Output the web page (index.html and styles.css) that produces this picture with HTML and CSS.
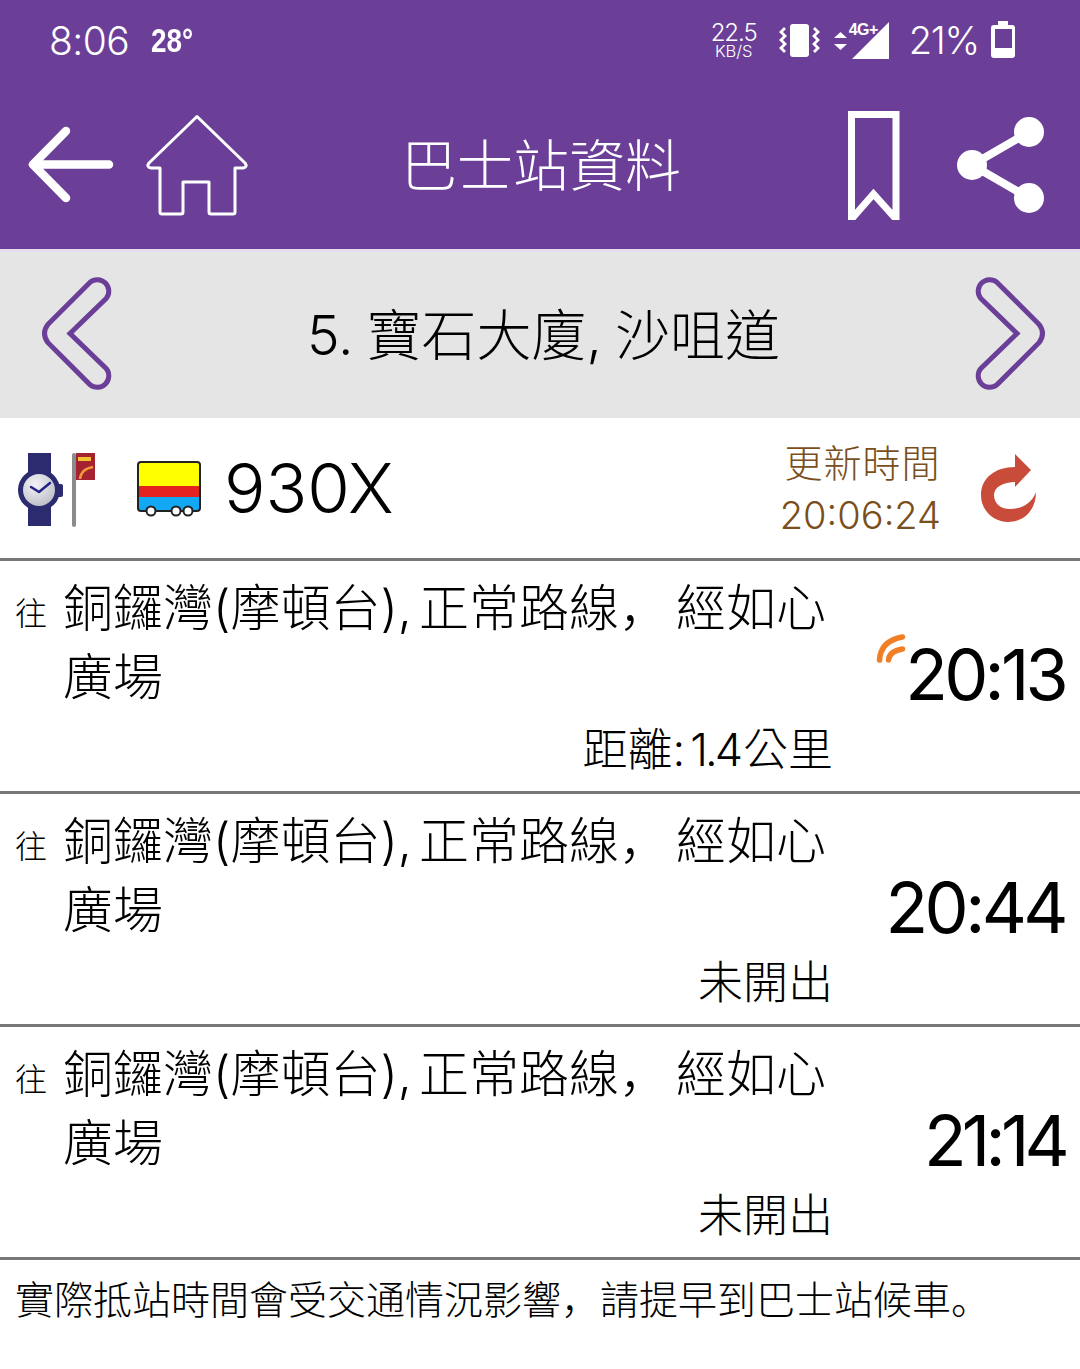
FILE: index.html
```html
<!DOCTYPE html>
<html lang="zh-Hant">

<head>
	<meta charset="UTF-8">
	<meta name="viewport" content="width=device-width, initial-scale=1.0">
	<title>巴士站資料</title>
	<link rel="stylesheet" href="styles.css">
</head>

<body>
	<header class="app-header">
		<div class="status-bar">
			<span class="clock">8:06</span>
			<span class="temp">28°</span>
			<div class="status-right">
				<div class="net-speed">
					<span class="net-value">22.5</span>
					<span class="net-unit">KB/S</span>
				</div>
				<svg class="vibrate-icon" viewBox="778 20 42 40" width="42" height="40">
					<rect x="789" y="24" width="19" height="33" rx="3" fill="#fff" />
					<path d="M784 28l-4 4 4 4-4 4 4 4-4 4 4 4M813 28l4 4-4 4 4 4-4 4 4 4-4 4" fill="none" stroke="#fff" stroke-width="2.800" />
				</svg>
				<div class="signal">
					<svg viewBox="830 18 60 42" width="60" height="42">
						<path d="M839.500 31l6.500 6h-13zM839.500 49l6.500-6h-13z" fill="#fff" />
						<path d="M851 58l37-37v37z" fill="#fff" />
					</svg>
					<span class="signal-label">4G+</span>
				</div>
				<span class="battery-text">21%</span>
				<svg class="battery-icon" viewBox="988 20 30 40" width="30" height="40">
					<path d="M998 21h10v4h4q3 0 3 3v27q0 3-3 3h-18q-3 0-3-3v-27q0-3 3-3h4z" fill="#fff" />
					<rect x="995" y="29" width="17" height="19" fill="#6b3f97" />
				</svg>
			</div>
		</div>

		<div class="toolbar">
			<svg class="back-icon" viewBox="26 124 92 80" width="92" height="80">
				<path d="M109 163.500H36M66 130L33 163.500 66 197" fill="none" stroke="#fff" stroke-width="8.500" stroke-linecap="round" stroke-linejoin="round" />
			</svg>
			<svg class="home-icon" viewBox="144 112 106 104" width="106" height="104">
				<path d="M197 115.500L149 162q-3 4 2 5h9v44q0 2 2 2h19q2 0 2-2v-30h26v30q0 2 2 2h22q2 0 2-2v-44h8q5-1 2-5z" fill="none" stroke="#fff" stroke-width="3" stroke-linejoin="round" />
			</svg>
			<h1 class="page-title">巴士站資料</h1>
			<svg class="bookmark-icon" viewBox="846 111 56 110" width="56" height="110">
				<path d="M851.500 220V115.500H896V220L873.500 195z" fill="none" stroke="#fff" stroke-width="7" />
			</svg>
			<svg class="share-icon" viewBox="955 114 92 100" width="92" height="100">
				<path d="M1029 131L972 164l57 33" fill="none" stroke="#fff" stroke-width="8" />
				<circle cx="1029" cy="131" r="15" fill="#fff" />
				<circle cx="972" cy="164" r="15" fill="#fff" />
				<circle cx="1029" cy="197" r="15" fill="#fff" />
			</svg>
		</div>
	</header>

	<nav class="stop-nav">
		<svg class="chevron" viewBox="0 0 76 120" width="76" height="120">
			<path d="M49.900 7.400L8 49.300Q1 58.500 8 67.700L49.900 109.600A11.500 11.500 0 0 0 66.100 93.400L30 58.500 66.100 23.600A11.500 11.500 0 0 0 49.900 7.400Z" fill="none" stroke="#6b3f97" stroke-width="5" />
		</svg>
		<span class="stop-name">5. 寶石大廈, 沙咀道</span>
		<svg class="chevron chevron-next" viewBox="0 0 76 120" width="76" height="120">
			<path d="M49.900 7.400L8 49.300Q1 58.500 8 67.700L49.900 109.600A11.500 11.500 0 0 0 66.100 93.400L30 58.500 66.100 23.600A11.500 11.500 0 0 0 49.900 7.400Z" fill="none" stroke="#6b3f97" stroke-width="5" />
		</svg>
	</nav>

	<section class="route-bar">
		<svg class="watch-icon" viewBox="16 451 82 78" width="82" height="78">
			<defs>
				<radialGradient id="face" cx="0.4" cy="0.35" r="0.8">
					<stop offset="0" stop-color="#f4f4f8" />
					<stop offset="1" stop-color="#aeb0b8" />
				</radialGradient>
			</defs>
			<rect x="28" y="453" width="23" height="20" fill="#2d2b70" />
			<rect x="28" y="507" width="23" height="19" fill="#2d2b70" />
			<rect x="56" y="484" width="7" height="13" rx="2" fill="#2d2b70" />
			<circle cx="39" cy="490" r="18.500" fill="url(#face)" stroke="#2d2b70" stroke-width="5" />
			<path d="M31 487l8 5 11-9" fill="none" stroke="#23238a" stroke-width="2.500" stroke-linecap="round" stroke-linejoin="round" />
			<rect x="72" y="453" width="4" height="74" rx="2" fill="#8b8b8b" />
			<rect x="76" y="453" width="19" height="27" fill="#a52230" />
			<rect x="78" y="457" width="13" height="4" fill="#f2c230" />
			<path d="M80 479q1-10 13-12" fill="none" stroke="#ef9a3a" stroke-width="2.500" />
		</svg>
		<svg class="bus-icon" viewBox="135 459 68 60" width="68" height="60">
			<path d="M138 497h62v11q0 3-3 3h-56q-3 0-3-3z" fill="#12a8f5" />
			<rect x="138" y="486" width="62" height="11" fill="#e4221f" />
			<path d="M141 462h56q3 0 3 3v21h-62v-21q0-3 3-3z" fill="#ffff00" />
			<path d="M141 462h56q3 0 3 3v43q0 3-3 3h-56q-3 0-3-3v-43q0-3 3-3z" fill="none" stroke="#222" stroke-width="2" />
			<circle cx="151" cy="511" r="4.500" fill="#fff" stroke="#222" stroke-width="2" />
			<circle cx="176" cy="511" r="4.500" fill="#fff" stroke="#222" stroke-width="2" />
			<circle cx="188" cy="511" r="4.500" fill="#fff" stroke="#222" stroke-width="2" />
		</svg>
		<span class="route-no">930X</span>
		<div class="updated">
			<span class="updated-label">更新時間</span>
			<span>20:06:24</span>
		</div>
		<svg class="refresh-icon" viewBox="979 454 60 70" width="60" height="70">
			<path d="M1015 467C995 467 981 478 981 495C981 511 994 522 1008 522C1024 522 1036 510 1036 492C1032 503 1022 509 1010 509C1000 509 994 503 994 495C994 487 1004 482 1015 482V487L1031 470 1015 454z" fill="#c94c3a" />
		</svg>
	</section>

	<main class="eta-list">
		<article class="eta-row">
			<div class="eta-info">
				<div class="eta-dest">
					<span class="to-label">往</span>
					<span class="dest-text" lang="zh-Hans">銅鑼灣(摩頓台), 正常路線， 經如心廣場</span>
				</div>
				<p class="eta-note">
					<span>距離:</span>
					<span class="dist-num">1.4</span>
					<span>公里</span>
				</p>
			</div>
			<div class="eta-time">
				<svg class="live-icon" viewBox="874 631 34 32" width="34" height="32">
					<path d="M879.500 660q1-19 23-23M888.500 660q1-9 14-11" fill="none" stroke="#f07f26" stroke-width="5.500" stroke-linecap="round" />
				</svg>
				<span class="tight-one">20:13</span>
			</div>
		</article>
		<article class="eta-row">
			<div class="eta-info">
				<div class="eta-dest">
					<span class="to-label">往</span>
					<span class="dest-text" lang="zh-Hans">銅鑼灣(摩頓台), 正常路線， 經如心廣場</span>
				</div>
				<p class="eta-note"><span>未開出</span></p>
			</div>
			<div class="eta-time"><span>20:44</span></div>
		</article>
		<article class="eta-row">
			<div class="eta-info">
				<div class="eta-dest">
					<span class="to-label">往</span>
					<span class="dest-text" lang="zh-Hans">銅鑼灣(摩頓台), 正常路線， 經如心廣場</span>
				</div>
				<p class="eta-note"><span>未開出</span></p>
			</div>
			<div class="eta-time"><span class="tight-two">21:14</span></div>
		</article>
	</main>

	<p class="footnote" lang="zh-Hans">實際抵站時間會受交通情況影響，請提早到巴士站候車。</p>
</body>

</html>
```

FILE: styles.css
```css
* {
	margin: 0;
	padding: 0;
	box-sizing: border-box;
}

body {
	background: white;
	color: #000;
	font-family: Inter, "Noto Sans CJK TC", sans-serif;
	font-weight: 300;
	overflow: hidden;
}

svg {
	display: block;
	flex: none;
}

.app-header {
	background: #6b3f97;
	color: white;
	height: 249px;
}

.status-bar {
	display: flex;
	align-items: center;
	height: 80px;
	padding-left: 49px;
}

.clock {
	font-size: 39px;
	letter-spacing: -0.6px;
}

.temp {
	margin-left: 22px;
	font-family: "Liberation Sans", sans-serif;
	font-size: 34px;
	font-weight: 700;
	transform: scaleX(0.82);
	transform-origin: left center;
}

.status-right {
	display: flex;
	align-items: center;
	margin-left: auto;
	margin-right: 62px;
}

.net-speed {
	display: flex;
	flex-direction: column;
	align-items: center;
	width: 48px;
}

.net-value {
	padding-top: 1px;
	font-size: 24px;
	line-height: 22px;
	letter-spacing: -1px;
}

.net-unit {
	margin-top: -1.500px;
	font-size: 16.500px;
	line-height: 16px;
}

.vibrate-icon {
	margin-left: 21px;
}

.signal {
	position: relative;
	margin-left: 10px;
}

.signal-label {
	position: absolute;
	left: 18px;
	top: 2px;
	font-size: 16px;
	font-weight: 700;
	letter-spacing: -0.5px;
	font-family: "Liberation Sans", sans-serif;
}

.battery-text {
	margin-left: 18px;
	font-size: 38px;
	letter-spacing: -1.2px;
}

.battery-icon {
	margin-left: 9px;
}

.toolbar {
	display: flex;
	align-items: center;
	height: 169px;
	padding: 0 33px 0 26px;
}

.back-icon {
	filter: blur(0.5px);
}

.home-icon {
	margin-left: 26px;
}

.page-title {
	flex: 1;
	text-align: center;
	font-size: 56px;
	font-weight: 300;
	padding: 0 14px 6px 0;
}

.share-icon {
	margin-left: 53px;
}

.stop-nav {
	display: flex;
	align-items: center;
	justify-content: space-between;
	height: 169px;
	padding: 0 33px 0 40px;
	background: #e5e5e5;
	border-top: 3px solid #e6dcf0;
}

.stop-name {
	font-size: 55px;
	word-spacing: -2.500px;
	padding-bottom: 8px;
}

.chevron-next {
	transform: scaleX(-1);
}

.route-bar {
	display: flex;
	align-items: center;
	height: 143px;
	padding: 2px 41px 0 16px;
	border-bottom: 3px solid #777;
}

.watch-icon {
	margin-top: 2px;
}

.bus-icon {
	margin-left: 37px;
}

.route-no {
	margin: -2px 0 0 21px;
	font-size: 69px;
}

.updated {
	display: flex;
	flex-direction: column;
	align-items: center;
	margin-left: auto;
	margin-right: 38px;
	font-size: 38px;
	line-height: 52px;
	color: #7a4f1c;
}

.updated-label {
	letter-spacing: 1px;
	padding-left: 4px;
}

.eta-row {
	display: flex;
	height: 233px;
	border-bottom: 3px solid #777;
}

.eta-info {
	display: flex;
	flex-direction: column;
	width: 832px;
	flex: none;
}

.eta-dest {
	display: flex;
	align-items: flex-start;
	padding-top: 13px;
}

.to-label {
	width: 63px;
	padding-left: 15px;
	font-size: 32px;
	line-height: 80px;
	flex: none;
}

.dest-text {
	font-family: Inter, "Noto Sans CJK SC", sans-serif;
	font-size: 50px;
	line-height: 69px;
	word-spacing: -7px;
}

.eta-note {
	display: flex;
	justify-content: flex-end;
	margin: 8px -1px 0 0;
	font-size: 45px;
	line-height: 60px;
}

.dist-num {
	margin: 0 3px 0 5px;
	letter-spacing: -3px;
}

.eta-time {
	position: relative;
	flex: 1;
	display: flex;
	align-items: center;
	justify-content: flex-end;
	padding: 0 15px 3px 0;
	font-size: 70px;
	font-weight: 400;
	letter-spacing: -3.600px;
}

.tight-one {
	letter-spacing: -3.800px;
}

.tight-two {
	letter-spacing: -4.800px;
}

.live-icon {
	position: absolute;
	left: 42px;
	top: 70px;
}

.footnote {
	padding: 15px 0 0 15px;
	font-family: Inter, "Noto Sans CJK SC", sans-serif;
	font-size: 39px;
	line-height: 50px;
	white-space: nowrap;
}
```
